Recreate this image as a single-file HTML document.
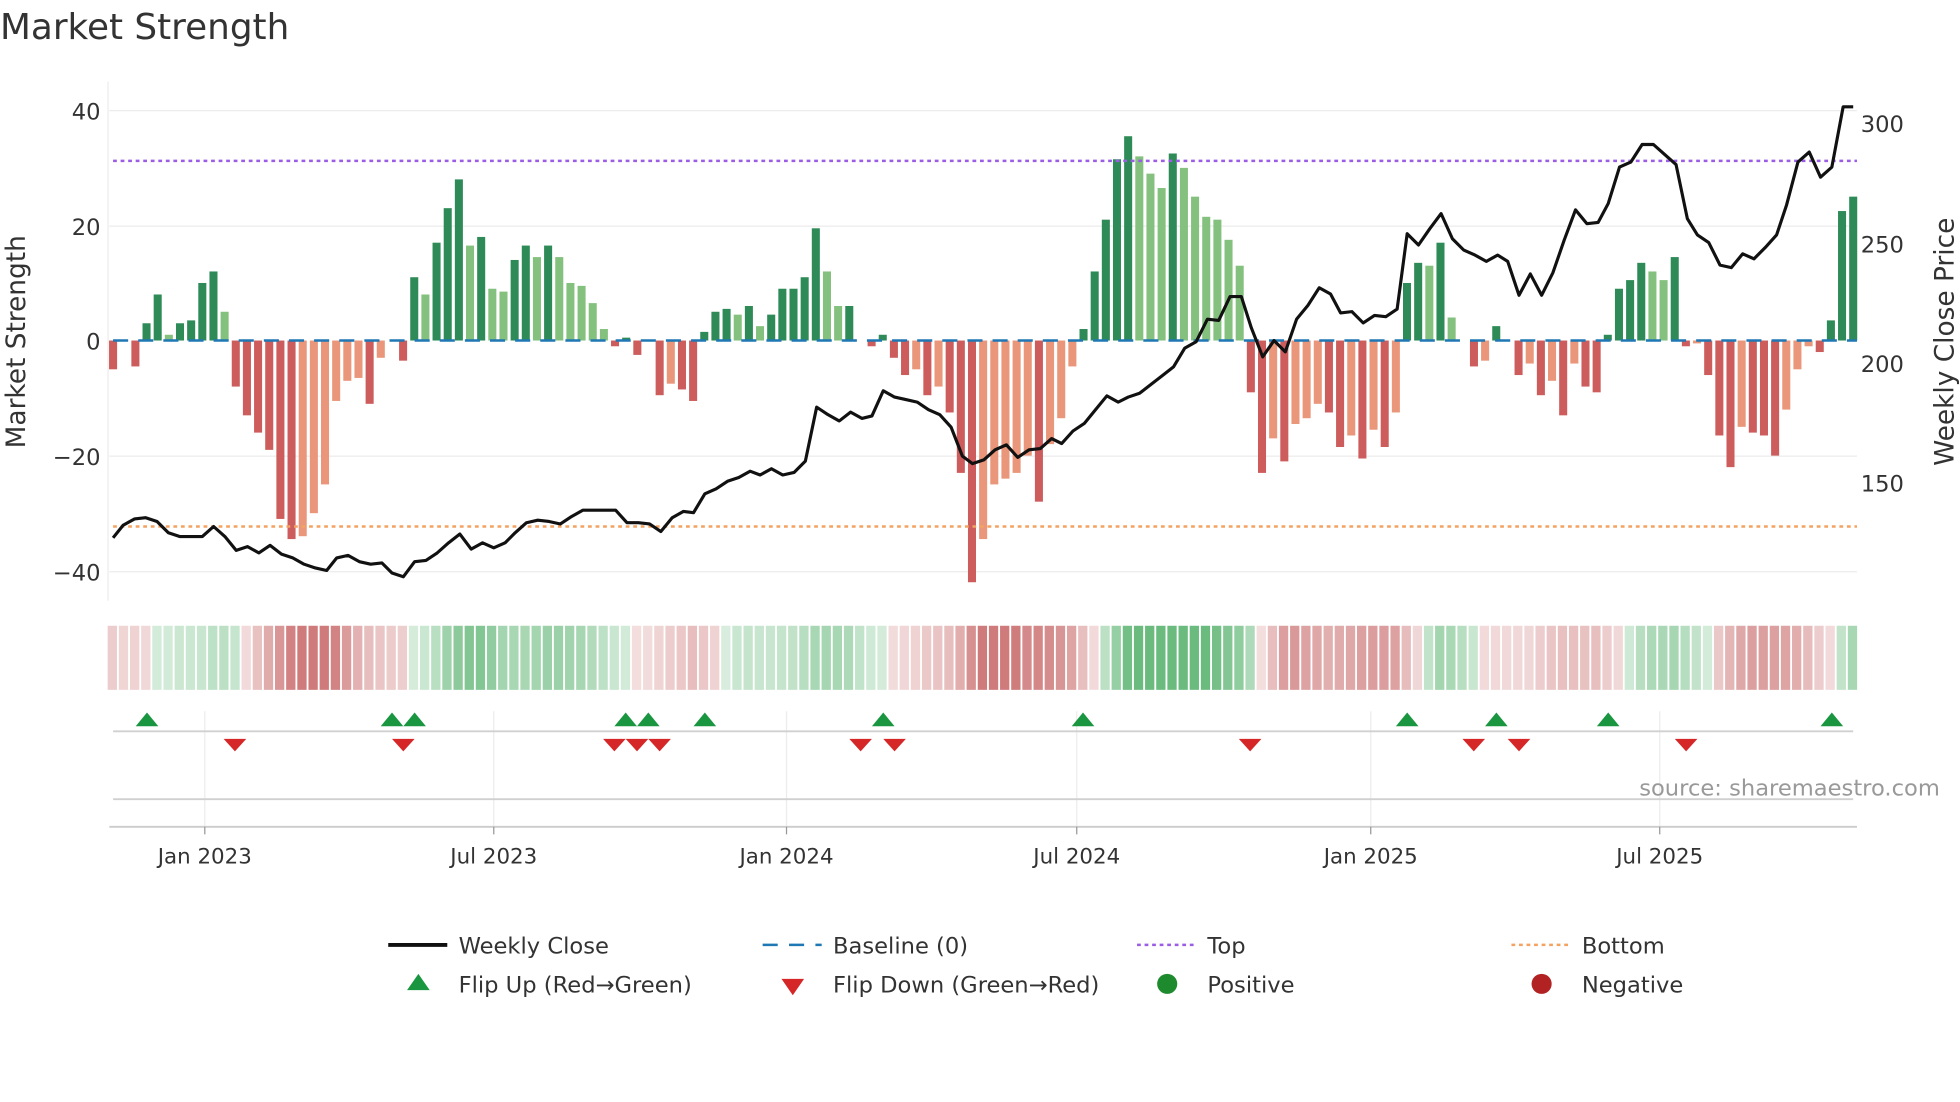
<!DOCTYPE html>
<html><head><meta charset="utf-8"><style>
html,body{margin:0;padding:0;background:#fff;width:1960px;height:1102px;overflow:hidden}
svg{display:block}
text{font-family:"DejaVu Sans","Liberation Sans",sans-serif;fill:#333}
</style></head><body>
<svg id="s" width="1960" height="1102" viewBox="0 0 1560 877" preserveAspectRatio="none" xmlns="http://www.w3.org/2000/svg">
<text x="0" y="31" font-size="28.5" fill="#333">Market Strength</text>
<g stroke="#ececec" stroke-width="1">
<line x1="87" y1="88" x2="1478" y2="88"/><line x1="87" y1="180" x2="1478" y2="180"/>
<line x1="87" y1="363" x2="1478" y2="363"/><line x1="87" y1="455" x2="1478" y2="455"/>
<line x1="86" y1="65" x2="86" y2="478"/>
</g>
<g id="bars"></g>
<line x1="90" y1="271" x2="1478" y2="271" stroke="#1f77b4" stroke-width="2" stroke-dasharray="12,8"/>
<line x1="90" y1="128" x2="1478" y2="128" stroke="#9b5de5" stroke-width="2" stroke-dasharray="3,3"/>
<line x1="90" y1="419" x2="1478" y2="419" stroke="#f4a261" stroke-width="2" stroke-dasharray="3,3"/>
<polyline id="price" fill="none" stroke="#111" stroke-width="2.5" stroke-linejoin="round"/>
<g font-size="18" text-anchor="end">
<text x="80" y="95">40</text><text x="80" y="187">20</text><text x="80" y="278">0</text>
<text x="80" y="370">−20</text><text x="80" y="462">−40</text></g>
<g font-size="18">
<text x="1481" y="105">300</text><text x="1481" y="201">250</text><text x="1481" y="296">200</text><text x="1481" y="391">150</text></g>
<text transform="translate(20,272) rotate(-90)" font-size="21" text-anchor="middle">Market Strength</text>
<text transform="translate(1555,272) rotate(-90)" font-size="21" text-anchor="middle">Weekly Close Price</text>
<g id="heat"></g>
<g stroke="#ececec" stroke-width="1">
<line x1="163" y1="566" x2="163" y2="658"/><line x1="393" y1="566" x2="393" y2="658"/>
<line x1="626" y1="566" x2="626" y2="658"/><line x1="857" y1="566" x2="857" y2="658"/>
<line x1="1091" y1="566" x2="1091" y2="658"/><line x1="1321" y1="566" x2="1321" y2="658"/>
</g>
<line x1="90" y1="582" x2="1475" y2="582" stroke="#d0d0d0" stroke-width="1.5"/>
<line x1="90" y1="636" x2="1475" y2="636" stroke="#d0d0d0" stroke-width="1.5"/>
<line x1="87" y1="658" x2="1478" y2="658" stroke="#ccc" stroke-width="1.5"/>
<g id="flips"></g>
<text x="1544" y="633" font-size="18" text-anchor="end" fill="#999" style="fill:#999">source: sharemaestro.com</text>
<g stroke="#999" stroke-width="1"><line x1="163" y1="658" x2="163" y2="664"/><line x1="393" y1="658" x2="393" y2="664"/><line x1="626" y1="658" x2="626" y2="664"/><line x1="857" y1="658" x2="857" y2="664"/><line x1="1091" y1="658" x2="1091" y2="664"/><line x1="1321" y1="658" x2="1321" y2="664"/></g>
<g font-size="17" text-anchor="middle">
<text x="163" y="687">Jan 2023</text><text x="393" y="687">Jul 2023</text><text x="626" y="687">Jan 2024</text>
<text x="857" y="687">Jul 2024</text><text x="1091" y="687">Jan 2025</text><text x="1321" y="687">Jul 2025</text></g>
<g font-size="18">
<line x1="309" y1="752" x2="356" y2="752" stroke="#111" stroke-width="3"/><text x="365" y="759">Weekly Close</text>
<line x1="607" y1="752" x2="654" y2="752" stroke="#1f77b4" stroke-width="2" stroke-dasharray="12,9"/><text x="663" y="759">Baseline (0)</text>
<line x1="905" y1="752" x2="952" y2="752" stroke="#9b5de5" stroke-width="2" stroke-dasharray="3,3"/><text x="961" y="759">Top</text>
<line x1="1203" y1="752" x2="1250" y2="752" stroke="#f4a261" stroke-width="2" stroke-dasharray="3,3"/><text x="1259" y="759">Bottom</text>
<polygon points="333,775 324,788 342,788" fill="#1a9641"/><text x="365" y="790">Flip Up (Red→Green)</text>
<polygon points="622,779 640,779 631,792" fill="#d62728"/><text x="663" y="790">Flip Down (Green→Red)</text>
<circle cx="929" cy="783" r="8" fill="#1e8a2e"/><text x="961" y="790">Positive</text>
<circle cx="1227" cy="783" r="8" fill="#b22222"/><text x="1259" y="790">Negative</text>
</g>
</svg>
<script>
var v=[-5,0,-4.5,3,8,1,3,3.5,10,12,5,-8,-13,-16,-19,-31,-34.5,-34,-30,-25,-10.5,-7,-6.5,-11,-3,0,-3.5,11,8,17,23,28,16.5,18,9,8.5,14,16.5,14.5,16.5,14.5,10,9.5,6.5,2,-1,0.5,-2.5,0,-9.5,-7.5,-8.5,-10.5,1.5,5,5.5,4.5,6,2.5,4.5,9,9,11,19.5,12,6,6,0,-1,1,-3,-6,-5,-9.5,-8,-12.5,-23,-42,-34.5,-25,-24,-23,-20,-28,-18,-13.5,-4.5,2,12,21,31.5,35.5,32,29,26.5,32.5,30,25,21.5,21,17.5,13,-9,-23,-17,-21,-14.5,-13.5,-11,-12.5,-18.5,-16.5,-20.5,-15.5,-18.5,-12.5,10,13.5,13,17,4,0,-4.5,-3.5,2.5,0,-6,-4,-9.5,-7,-13,-4,-8,-9,1,9,10.5,13.5,12,10.5,14.5,-1,-0.5,-6,-16.5,-22,-15,-16,-16.5,-20,-12,-5,-1,-2,3.5,22.5,25];
var ns="http://www.w3.org/2000/svg",b=document.getElementById('bars'),h=document.getElementById('heat');
function el(t,a,p){var e=document.createElementNS(ns,t);for(var k in a)e.setAttribute(k,a[k]);p.appendChild(e);return e;}
var step=1385/(v.length-1);
for(var i=0;i<v.length;i++){var x=90+step*i,val=v[i],p=i?v[i-1]:0,c;
 if(val>=0)c=(val>=p)?'#2e8b57':'#85c17e';else c=(val<=p)?'#cd5c5c':'#e9967a';
 var y0=271,y1=271-val*4.58;
 if(Math.abs(val)>0.2)el('rect',{x:x-3.2,y:Math.min(y0,y1),width:6.4,height:Math.abs(y1-y0),fill:c},b);
 var s=0,n=0;for(var j=Math.max(0,i-3);j<=i;j++){s+=v[j];n++;}s/=n;
 var a=Math.min(0.8,0.2+Math.abs(s)/45);
 var col=s>=0?'rgba(70,170,95,'+a+')':'rgba(195,90,90,'+a+')';
 el('rect',{x:x-4.3,y:498,width:7.4,height:51,fill:col},h);}
var pts="90,428 98,418 107,413 116,412 125,415 134,424 143,427 152,427 161,427 170,419 179,427 188,438 197,435 206,440 215,434 224,441 233,444 242,449 251,452 260,454 268,444 277,442 286,447 295,449 304,448 312,456 321,459 330,447 339,446 348,440 357,432 366,425 375,437 384,432 393,436 402,432 410,424 419,416 428,414 437,415 446,417 455,411 464,406 473,406 482,406 490,406 499,416 508,416 517,417 526,423 535,412 544,407 552,408 561,393 570,389 579,383 588,380 597,375 605,378 614,373 623,378 632,376 641,367 650,324 659,330 668,335 677,328 686,333 694,331 703,311 712,316 721,318 730,320 739,326 748,330 757,340 766,363 774,369 783,366 792,358 801,354 810,364 819,358 828,357 837,349 845,353 854,343 863,337 872,326 881,315 890,320 898,316 907,313 916,306 925,299 934,292 943,277 952,272 961,254 970,255 979,236 988,236 996,261 1005,284 1014,271 1023,280 1032,254 1041,243 1050,229 1059,234 1067,249 1076,248 1085,257 1094,251 1103,252 1112,246 1120,186 1129,195 1138,182 1147,170 1156,190 1165,199 1174,203 1183,208 1192,203 1200,208 1209,235 1218,218 1227,235 1236,217 1245,191 1254,167 1263,178 1272,177 1280,162 1289,133 1298,129 1307,115 1316,115 1325,123 1334,131 1343,174 1351,187 1360,193 1369,211 1378,213 1387,202 1396,206 1405,197 1414,187 1422,163 1431,129 1440,121 1449,141 1458,133 1467,85 1475,85";
document.getElementById('price').setAttribute('points',pts);
var f=document.getElementById('flips');
[117,312,330,498,516,561,703,862,1120,1191,1280,1458].forEach(function(x){el('polygon',{points:x+',567 '+(x-9)+',578 '+(x+9)+',578',fill:'#1a9641'},f);});
[187,321,489,507,525,685,712,995,1173,1209,1342].forEach(function(x){el('polygon',{points:(x-9)+',588 '+(x+9)+',588 '+x+',598',fill:'#d62728'},f);});
</script>
</body></html>
